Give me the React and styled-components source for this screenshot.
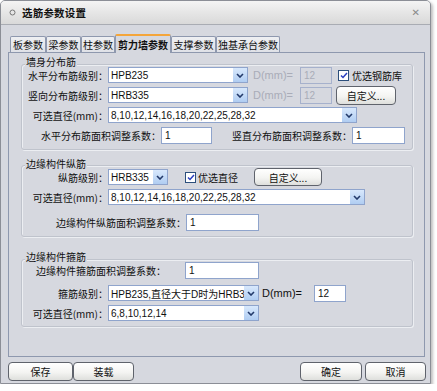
import React from 'react';
import styled, { createGlobalStyle } from 'styled-components';

const Global = createGlobalStyle`
  html, body { margin: 0; padding: 0; background: #ffffff; }
  body {
    font-family: "Noto Sans CJK SC", "Liberation Sans", sans-serif;
    font-size: 10px;
    color: #000;
  }
  * { box-sizing: border-box; }
`;

const BG = '#d6d8df';

const Window = styled.div`
  width: 431px;
  height: 384px;
  border: 1px solid #8b8e96;
  border-radius: 5px 5px 0 0;
  background: ${BG};
  display: flex;
  flex-direction: column;
  box-shadow: 2px 2px 3px rgba(0, 0, 0, 0.25);
  overflow: hidden;
`;

const TitleBar = styled.div`
  height: 24px;
  flex: none;
  display: flex;
  align-items: center;
  padding: 0 8px 0 8px;
  background: linear-gradient(#f4f4f4, #e6e6e6 50%, #d9d9d9);
  border-bottom: 1px solid #a9acb3;
`;

const TitleIcon = styled.svg`
  width: 7px;
  height: 7px;
  margin-right: 6px;
  flex: none;
`;

const Title = styled.div`
  font-weight: bold;
  font-size: 10.5px;
  letter-spacing: 0.2px;
  color: #111;
  flex: 1;
`;

const Close = styled.div`
  font-family: "DejaVu Sans", sans-serif;
  font-size: 10px;
  color: #8a8a8a;
  margin-right: 2px;
`;

const TabStrip = styled.div`
  margin-top: 9px;
  height: 18px;
  flex: none;
  display: flex;
  align-items: flex-end;
  padding-left: 9px;
  position: relative;
  z-index: 1;
`;

const Tab = styled.div`
  width: ${(p) => p.$w}px;
  height: ${(p) => (p.$active ? '19px' : '16px')};
  margin-bottom: ${(p) => (p.$active ? '-1px' : '0')};
  border: 1px solid #8e98ae;
  border-bottom: none;
  border-top: ${(p) => (p.$active ? '2px solid #f4a53a' : '1px solid #8e98ae')};
  border-radius: 2px 2px 0 0;
  background: ${(p) => (p.$active ? BG : 'linear-gradient(#eeeff2, #dfe1e7)')};
  font-weight: ${(p) => (p.$active ? 'bold' : 'normal')};
  font-size: 10px;
  display: flex;
  align-items: center;
  justify-content: center;
  white-space: nowrap;
  overflow: hidden;
  color: #111;
`;

const Panel = styled.div`
  margin-left: 7px;
  width: 417px;
  height: 305px;
  flex: none;
  border: 1px solid #8e98ae;
  background: ${BG};
  position: relative;
  z-index: 0;
  display: flex;
  flex-direction: column;
`;

const Group = styled.div`
  margin: ${(p) => p.$mt}px 0 0 12px;
  width: 392px;
  border: 1px solid #bfc3cc;
  border-radius: 3px;
  box-shadow: 1px 1px 0 #eceef2, inset 1px 1px 0 #eceef2;
  padding: ${(p) => p.$pt || 0}px 0 ${(p) => p.$pb}px 0;
  display: flex;
  flex-direction: column;
`;

const Legend = styled.div`
  display: block;
  width: max-content;
  margin: -9px 0 -3px 3px;
  padding: 0 1px;
  line-height: 12px;
  background: ${BG};
  font-size: 10px;
  color: #111;
`;

const Row = styled.div`
  height: 20px;
  margin-top: ${(p) => p.$mt || 0}px;
  display: flex;
  align-items: center;
`;

const Label = styled.div`
  width: ${(p) => p.$w}px;
  flex: none;
  text-align: ${(p) => p.$align || 'right'};
  padding-left: ${(p) => p.$pl || 0}px;
  white-space: nowrap;
  font-size: 10px;
  color: #111;
`;

const Caption = styled.div`
  width: ${(p) => p.$w}px;
  margin-left: ${(p) => p.$ml || 0}px;
  flex: none;
  font-family: "Liberation Sans", sans-serif;
  font-size: 11px;
  color: ${(p) => (p.$disabled ? '#a9acb8' : '#111')};
  white-space: nowrap;
`;

const SelectBox = styled.div`
  width: ${(p) => p.$w}px;
  height: 16px;
  flex: none;
  display: flex;
  align-items: center;
  background: #fff;
  border: 1px solid #8fa4cc;
`;

const SelectText = styled.div`
  flex: 1;
  min-width: 0;
  overflow: hidden;
  white-space: nowrap;
  padding-left: 2px;
  font-family: "Liberation Sans", "Noto Sans CJK SC", sans-serif;
  font-size: 10px;
  color: #111;
`;

const ArrowBtn = styled.div`
  width: 14px;
  height: 14px;
  flex: none;
  display: flex;
  align-items: center;
  justify-content: center;
  background: linear-gradient(#d8e8fc, #b0cdf2);
`;

const Input = styled.div`
  width: ${(p) => p.$w}px;
  height: 17px;
  margin-left: ${(p) => p.$ml || 0}px;
  flex: none;
  display: flex;
  align-items: center;
  padding-left: 3px;
  background: ${(p) => (p.$disabled ? BG : '#fff')};
  border: 1px solid ${(p) => (p.$disabled ? '#a6b1cc' : '#8fa4cc')};
  font-family: "Liberation Sans", sans-serif;
  font-size: 10px;
  color: ${(p) => (p.$disabled ? '#a9acb8' : '#111')};
`;

const CheckWrap = styled.div`
  margin-left: ${(p) => p.$ml}px;
  display: flex;
  align-items: center;
  flex: none;
`;

const CheckBox = styled.div`
  width: 11px;
  height: 11px;
  background: #fff;
  border: 1px solid #2c4f7c;
  display: flex;
  align-items: center;
  justify-content: center;
  margin-right: ${(p) => p.$gap}px;
`;

const CheckText = styled.span`
  font-size: 10px;
  color: #111;
  white-space: nowrap;
`;

const Button = styled.div`
  width: ${(p) => p.$w}px;
  height: ${(p) => p.$h || 19}px;
  margin-left: ${(p) => p.$ml || 0}px;
  flex: none;
  display: flex;
  align-items: center;
  justify-content: center;
  border: 1px solid #5f636c;
  border-radius: 4px;
  background: linear-gradient(#ffffff, #f4f4f2 55%, #dedfdc);
  font-size: 10px;
  color: #111;
`;

const Footer = styled.div`
  margin-top: 5px;
  height: 19px;
  flex: none;
  display: flex;
  align-items: center;
  padding: 0 4px 0 7px;
`;

const Spacer = styled.div`
  flex: 1;
`;

function Arrow() {
  return (
    <ArrowBtn>
      <svg width="8" height="5" viewBox="0 0 8 5">
        <path d="M1 1 L4 4 L7 1" fill="none" stroke="#233a6a" strokeWidth="1.6" />
      </svg>
    </ArrowBtn>
  );
}

function Select({ w, value }) {
  return (
    <SelectBox $w={w}>
      <SelectText>{value}</SelectText>
      <Arrow />
    </SelectBox>
  );
}

function Check({ ml, gap, label }) {
  return (
    <CheckWrap $ml={ml}>
      <CheckBox $gap={gap}>
        <svg width="8" height="7" viewBox="0 0 8 7">
          <path d="M1 3.5 L3 5.5 L7 1" fill="none" stroke="#2a3fbf" strokeWidth="1.5" />
        </svg>
      </CheckBox>
      <CheckText>{label}</CheckText>
    </CheckWrap>
  );
}

const DIAMS = '8,10,12,14,16,18,20,22,25,28,32';

const TABS = [
  { label: '板参数', w: 36 },
  { label: '梁参数', w: 35 },
  { label: '柱参数', w: 34 },
  { label: '剪力墙参数', w: 56, active: true },
  { label: '支撑参数', w: 45 },
  { label: '独基承台参数', w: 64 },
];

export default function App() {
  return (
    <>
      <Global />
      <Window>
        <TitleBar>
          <TitleIcon viewBox="0 0 7 7">
            <circle cx="3.5" cy="3.5" r="2.5" fill="none" stroke="#777" strokeWidth="1" />
          </TitleIcon>
          <Title>选筋参数设置</Title>
          <Close>✕</Close>
        </TitleBar>

        <TabStrip>
          {TABS.map((t) => (
            <Tab key={t.label} $w={t.w} $active={t.active}>
              {t.label}
            </Tab>
          ))}
        </TabStrip>

        <Panel>
          <Group $mt={11} $pb={4}>
            <Legend>墙身分布筋</Legend>
            <Row>
              <Label $w={86}>水平分布筋级别：</Label>
              <Select w={140} value="HPB235" />
              <Caption $w={47} $ml={5} $disabled>D(mm)=</Caption>
              <Input $w={32} $disabled>12</Input>
              <Check ml={6} gap={3} label="优选钢筋库" />
            </Row>
            <Row>
              <Label $w={86}>竖向分布筋级别：</Label>
              <Select w={140} value="HRB335" />
              <Caption $w={47} $ml={5} $disabled>D(mm)=</Caption>
              <Input $w={32} $disabled>12</Input>
              <Button $w={60} $ml={4}>自定义...</Button>
            </Row>
            <Row>
              <Label $w={86}>可选直径(mm)：</Label>
              <Select w={249} value={DIAMS} />
            </Row>
            <Row>
              <Label $w={139}>水平分布筋面积调整系数：</Label>
              <Input $w={51}>1</Input>
              <Label $w={140}>竖直分布筋面积调整系数：</Label>
              <Input $w={53}>1</Input>
            </Row>
          </Group>

          <Group $mt={15} $pt={1} $pb={4}>
            <Legend>边缘构件纵筋</Legend>
            <Row>
              <Label $w={86}>纵筋级别：</Label>
              <Select w={60} value="HRB335" />
              <Check ml={17} gap={2} label="优选直径" />
              <Button $w={68} $h={18} $ml={16}>自定义...</Button>
            </Row>
            <Row>
              <Label $w={86}>可选直径(mm)：</Label>
              <Select w={257} value={DIAMS} />
            </Row>
            <Row $mt={5}>
              <Label $w={164}>边缘构件纵筋面积调整系数：</Label>
              <Input $w={73}>1</Input>
            </Row>
          </Group>

          <Group $mt={22} $pb={3}>
            <Legend>边缘构件箍筋</Legend>
            <Row>
              <Label $w={163} $align="left" $pl={14}>边缘构件箍筋面积调整系数：</Label>
              <Input $w={74}>1</Input>
            </Row>
            <Row $mt={3}>
              <Label $w={86}>箍筋级别：</Label>
              <Select w={151} value="HPB235,直径大于D时为HRB335" />
              <Caption $w={52} $ml={3}>D(mm)=</Caption>
              <Input $w={32}>12</Input>
            </Row>
            <Row>
              <Label $w={86}>可选直径(mm)：</Label>
              <Select w={151} value="6,8,10,12,14" />
            </Row>
          </Group>
        </Panel>

        <Footer>
          <Button $w={65}>保存</Button>
          <Button $w={61} $ml={0}>装载</Button>
          <Spacer />
          <Button $w={62}>确定</Button>
          <Button $w={61} $ml={3}>取消</Button>
        </Footer>
      </Window>
    </>
  );
}
